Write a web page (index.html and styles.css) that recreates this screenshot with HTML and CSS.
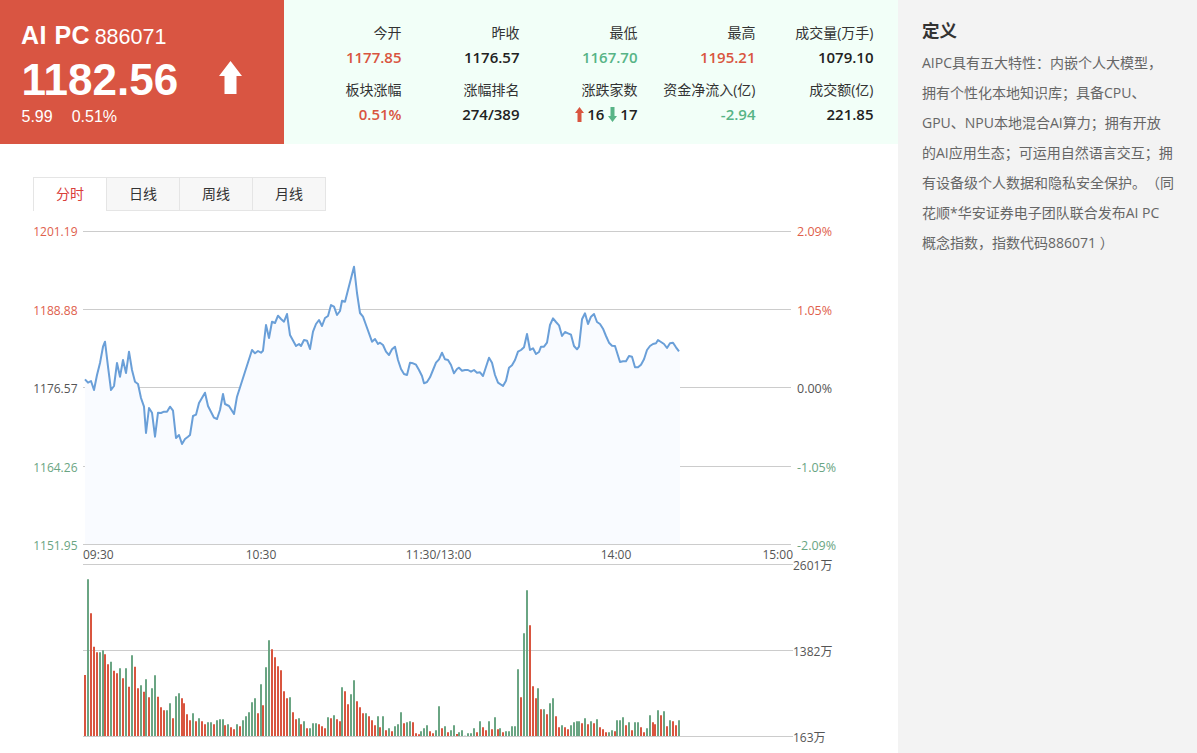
FILE: index.html
```html
<!DOCTYPE html>
<html lang="zh-CN">

<head>
    <meta charset="UTF-8">
    <meta name="viewport" content="width=device-width, initial-scale=1.0">
    <title>AI PC 886071</title>
    <link rel="stylesheet" href="styles.css">
</head>

<body>
    <main class="main">
        <header class="board">
            <div class="quote">
                <h1 class="quote-name">AI PC <span class="quote-code">886071</span></h1>
                <div class="quote-price">
                    <span>1182.56</span>
                    <svg class="quote-arrow" width="23" height="33" viewBox="0 0 23 33">
                        <polygon points="11.5,0 23,15 17.5,15 17.5,33 5.5,33 5.5,15 0,15" fill="#fff" />
                    </svg>
                </div>
                <div class="quote-change"><span>5.99</span><span>0.51%</span></div>
            </div>
            <dl class="stats">
                <div class="stat"><dt>今开</dt><dd class="up">1177.85</dd></div>
                <div class="stat"><dt>昨收</dt><dd>1176.57</dd></div>
                <div class="stat"><dt>最低</dt><dd class="down">1167.70</dd></div>
                <div class="stat"><dt>最高</dt><dd class="up">1195.21</dd></div>
                <div class="stat"><dt>成交量(万手)</dt><dd>1079.10</dd></div>
                <div class="stat"><dt>板块涨幅</dt><dd class="up">0.51%</dd></div>
                <div class="stat"><dt>涨幅排名</dt><dd>274/389</dd></div>
                <div class="stat">
                    <dt>涨跌家数</dt>
                    <dd class="updown">
                        <svg width="9" height="15" viewBox="0 0 9 15"><polygon points="4.5,0 9,6 6.5,6 6.5,15 2.5,15 2.5,6 0,6" fill="#d9553f" /></svg>
                        <span>16</span>
                        <svg width="9" height="15" viewBox="0 0 9 15"><polygon points="4.5,15 9,9 6.5,9 6.5,0 2.5,0 2.5,9 0,9" fill="#57b486" /></svg>
                        <span>17</span>
                    </dd>
                </div>
                <div class="stat"><dt>资金净流入(亿)</dt><dd class="down">-2.94</dd></div>
                <div class="stat"><dt>成交额(亿)</dt><dd>221.85</dd></div>
            </dl>
        </header>

        <div class="tabs">
            <a class="tab active">分时</a>
            <a class="tab">日线</a>
            <a class="tab">周线</a>
            <a class="tab">月线</a>
        </div>

        <svg class="chart" width="898" height="542" viewBox="0 211 898 542">
            <!-- price grid -->
            <path class="grid" d="M83 231.5H791M83 309.5H791M83 387.5H791M83 466.5H791M83 544.5H791" />
            <path id="priceArea" class="price-area" />
            <path id="priceLine" class="price-line" />

            <text class="axis up" x="77.5" y="236" text-anchor="end">1201.19</text>
            <text class="axis up" x="77.5" y="315" text-anchor="end">1188.88</text>
            <text class="axis" x="77.5" y="393" text-anchor="end">1176.57</text>
            <text class="axis fall" x="77.5" y="472" text-anchor="end">1164.26</text>
            <text class="axis fall" x="77.5" y="550" text-anchor="end">1151.95</text>

            <text class="axis pct up" x="797" y="236">2.09%</text>
            <text class="axis pct up" x="797" y="315">1.05%</text>
            <text class="axis pct" x="797" y="393">0.00%</text>
            <text class="axis pct fall" x="797" y="472">-1.05%</text>
            <text class="axis pct fall" x="797" y="550">-2.09%</text>

            <text class="axis" x="83" y="559">09:30</text>
            <text class="axis" x="261" y="559" text-anchor="middle">10:30</text>
            <text class="axis" x="438.5" y="559" text-anchor="middle">11:30/13:00</text>
            <text class="axis" x="616" y="559" text-anchor="middle">14:00</text>
            <text class="axis" x="793" y="559" text-anchor="end">15:00</text>

            <!-- volume grid -->
            <path class="grid" d="M83 564.5H793M83 650.5H793M83 736.5H793" />
            <path id="barsUp" class="bars bars-up" />
            <path id="barsDown" class="bars bars-down" />

            <text class="axis" x="793" y="570">2601万</text>
            <text class="axis" x="793" y="656">1382万</text>
            <text class="axis" x="793" y="742">163万</text>
        </svg>
    </main>

    <aside class="side">
        <h2>定义</h2>
        <p>AIPC具有五大特性：内嵌个人大模型，<br>拥有个性化本地知识库；具备CPU、<br>GPU、NPU本地混合AI算力；拥有开放<br>的AI应用生态；可运用自然语言交互；拥<br>有设备级个人数据和隐私安全保护。（同<br>花顺*华安证券电子团队联合发布AI PC<br>概念指数，指数代码886071 ）</p>
    </aside>

    <script src="script.js"></script>
</body>

</html>
```

FILE: styles.css
```css
* {
    box-sizing: border-box;
}

body {
    font-family: "Open Sans", "Noto Sans CJK SC", sans-serif;
    margin: 0;
    height: 753px;
    display: flex;
    overflow: hidden;
    background-color: #fff;
    color: #333;
}

.main {
    width: 898px;
    flex-shrink: 0;
}

.board {
    display: flex;
    height: 144px;
    background-color: #f2fff8;
}

.quote {
    width: 284px;
    padding: 20px 0 0 21px;
    background-color: #d95542;
    color: #fff;
    font-family: "Liberation Sans", Arial, sans-serif;
}

.quote-name {
    margin: 0;
    font-size: 25px;
    line-height: 30px;
    letter-spacing: 0.5px;
    font-weight: bold;
}

.quote-code {
    font-size: 21.5px;
    font-weight: normal;
    letter-spacing: 0;
    margin-left: -3px;
}

.quote-price {
    display: flex;
    align-items: center;
    height: 52px;
    margin-top: 2px;
    padding-left: 0.5px;
    font-size: 44px;
    font-weight: bold;
}

.quote-arrow {
    margin: -6px 0 0 41px;
}

.quote-change {
    display: flex;
    gap: 19px;
    font-size: 16px;
    line-height: 22px;
    padding-left: 0.5px;
}

.stats {
    display: grid;
    grid-template-columns: repeat(5, 118px);
    grid-auto-rows: 57px;
    margin: 0 0 0 -0.5px;
    padding-top: 22px;
    text-align: right;
}

.stat dt {
    font-size: 14px;
    line-height: 22px;
}

.stat dd {
    margin: 2px 0 0;
    font-size: 15px;
    line-height: 22px;
    font-weight: 600;
    color: #222;
}

.stat dd.up {
    color: #d9553f;
}

.stat dd.down {
    color: #57b486;
}

.updown {
    display: flex;
    justify-content: flex-end;
    align-items: center;
    gap: 3.5px;
}

.tabs {
    display: flex;
    margin: 33px 0 0 33px;
}

.tab {
    width: 74px;
    height: 34px;
    margin-right: -1px;
    border: 1px solid #e5e5e5;
    background-color: #f7f7f7;
    font-size: 14px;
    line-height: 32px;
    text-align: center;
}

.tab.active {
    background-color: #fff;
    border-bottom: none;
    color: #d9403a;
}

.chart {
    display: block;
}

.grid {
    fill: none;
    stroke: #ccc;
    stroke-width: 1;
}

.price-area {
    fill: #f9fbff;
}

.price-line {
    fill: none;
    stroke: #6a9fd8;
    stroke-width: 2;
    stroke-linejoin: round;
}

.bars {
    fill: none;
    stroke-width: 2;
}

.bars-up {
    stroke: #d9553f;
}

.bars-down {
    stroke: #6aa583;
}

.axis {
    font-size: 12px;
    fill: #555;
}

.axis.pct {
    font-size: 12.5px;
}

.axis.up {
    fill: #e0604c;
}

.axis.fall {
    fill: #6aa583;
}

.side {
    flex: 1;
    padding: 17px 0 0 24px;
    background-color: #f3f3f3;
    text-spacing-trim: space-all;
}

.side h2 {
    margin: 0;
    font-size: 17.5px;
    line-height: 26px;
    font-weight: bold;
}

.side p {
    margin: 5px 0 0;
    font-size: 14px;
    line-height: 30px;
    white-space: nowrap;
    color: #666;
}
```

FILE: script.js
```js
// price line, [x, y] in page px
const price = [
    [85, 379.3], [88, 382.7], [91, 381], [94, 390], [97, 375], [100, 363], [103, 346.7], [105, 341.7],
    [108, 366.7], [111, 390], [114, 386], [117, 363], [120, 376.7], [123, 360], [126, 373], [129, 351.7],
    [132, 370], [135, 381.7], [138, 384], [141, 398], [144, 406.7], [146, 433], [149, 408], [152, 412.7],
    [155, 436.7], [158, 412.7], [161, 413], [164, 411.7], [167, 411.7], [170, 406.7], [173, 410.7], [176, 438],
    [179, 435], [182, 444], [185, 439], [188, 436.7], [190, 435], [193, 416], [196, 414.7], [199, 403],
    [205, 392.7], [208, 406], [214, 417.7], [217, 419], [220, 410], [223, 394], [225, 404], [229, 406],
    [234, 414], [237, 396.7], [252, 350], [255, 353.3], [258, 351], [261, 352.7], [263, 350.7], [266, 325],
    [269, 338], [272, 321.7], [275, 323], [278, 315.7], [281, 319], [284, 321.7], [287, 314], [290, 335],
    [296, 346], [299, 344], [301, 346], [304, 340], [307, 340.7], [310, 349], [313, 331.7], [316, 324],
    [319, 320], [322, 326], [325, 318], [328, 316], [331, 305], [334, 306.7], [337, 315], [340, 311],
    [342, 300.7], [345, 301.7], [348, 290], [354, 266.7], [357, 293], [360, 313], [363, 316.7], [366, 325],
    [372, 341.7], [375, 339], [378, 344], [380, 342.7], [383, 345], [386, 351.7], [389, 355], [392, 349.3],
    [395, 346.7], [398, 360], [401, 369], [404, 374], [407, 375], [410, 362.7], [413, 363.3], [416, 364.7],
    [419, 370], [422, 376], [424, 383.3], [427, 382], [430, 377.3], [433, 370], [436, 362.7], [439, 359.3],
    [442, 352.7], [445, 359.3], [448, 360], [451, 365], [454, 373.3], [457, 369], [459, 367.7], [462, 370.7],
    [465, 370], [468, 370], [471, 371.7], [474, 370], [477, 372.7], [480, 372.3], [483, 376], [489, 357.7],
    [492, 362.7], [495, 375], [498, 382.7], [503, 386], [506, 380.7], [509, 367.7], [512, 365.3], [515, 360],
    [518, 351.7], [521, 350], [524, 347.3], [527, 334], [530, 350], [533, 348.3], [536, 354], [539, 352],
    [541, 346.7], [544, 346.7], [547, 342.7], [550, 325], [553, 318.3], [556, 322], [559, 325.3], [562, 336],
    [565, 332], [568, 333.3], [571, 334.7], [574, 346], [577, 349.3], [579, 346.7], [582, 319.3], [585, 313.3],
    [588, 324], [591, 316.7], [594, 314], [597, 322], [600, 324], [603, 328.7], [606, 336], [609, 342.7],
    [612, 345.7], [615, 346], [620, 362], [623, 361.3], [626, 361.3], [629, 356], [632, 356.7], [635, 367.3],
    [638, 367.3], [641, 364.7], [644, 359.3], [647, 350], [650, 346], [653, 344], [656, 343.3], [658, 340],
    [661, 342], [664, 344], [667, 348], [670, 343.3], [673, 342.7], [676, 347.3], [679, 351.3]
];

// volume bars: x*3 offset, top*3 offset, r = up / g = down
const barsLeft = `45r315 54g28 63r130 72r230 81r247 90g247 99g241 105r253 114r283 123g275 132r302 141r310
150g295 159r325 168g295 177r350 186g256 195r290 204r355 213g346 222r365 228g328 237r382 246g355 255g316
264r380 273r412 282r421 291g421 300g400 309r445 318g379 327g370 336r385 342r400 351r433 360r451 369g430
378r454 387g445 396r454 405r463 414g457 423g457 432r463 441g451 450g448 459g448 465r466 474g463 483r472
492r478 501g463 510r469 519g451 528g439 537g427 546g397 555g385 564r430 573g343 579r406 588g292 597g211
606r238 615r262 624r289 633r301 642r364 651r385 660g382 669r427 678r448 687g445 693r463 702g454 711r475
720g475 729g460 738g460 747r463 756r469 765r475 774g442 783r445 792g436 801r448 810r454 816g352 825r364
834r403 843g373 852g331 861r394 870r412 879r430 888g430 897r439 906r451 915r466 924g439`;

const barsRight = `0r472 9g439 18r481 27g475 36r484 45g469 54g463 63g427 72r460 81g457 90g454 99r457 108r490
117r493 123g484 132g475 141g466 150r484 159r490 168g481 177g409 186r475 195g469 204r487 213g481 222g466
231r492 237g487 246g481 255g497 264g490 273g490 282g475 291r487 300g454 309r472 318r481 327g454 336r478
345g442 354r478 360g475 369r487 378g484 387g484 396g469 405g469 414g298 423r382 432g190 441g61 450r166
459r349 468r385 474g355 483r418 492g418 501r433 510g400 519g385 528r439 537r472 546g466 555r472 564r478
573g466 582g457 591g454 597g454 606r460 615g445 624r463 633g454 642r460 651g448 660r472 669r478 678r487
687g487 696g481 705r484 711g451 720g451 729g442 738r466 747g457 756r481 765g457 774g457 783r472 792r487
801g475 810g436 819r457 825r463 834g421 843r436 852g424 861r469 870g451 879r454 888r466 897g451`;

const baseline = 736;
const linePath = price.map(p => p[0] + ' ' + p[1]).join('L');

document.getElementById('priceLine').setAttribute('d', 'M' + linePath);
document.getElementById('priceArea').setAttribute('d', 'M' + linePath + 'L680 351.3L680 544L85 544Z');

let upPath = '';
let downPath = '';

function addBars(text, originX) {
    text.trim().split(/\s+/).forEach(item => {
        const match = item.match(/(\d+)([rg])(\d+)/);
        const x = originX + match[1] / 3;
        const top = 570 + match[3] / 3;
        const seg = 'M' + x + ' ' + top.toFixed(1) + 'V' + baseline;
        if (match[2] === 'r') {
            upPath += seg;
        } else {
            downPath += seg;
        }
    });
}

addBars(barsLeft, 70);
addBars(barsRight, 380);

document.getElementById('barsUp').setAttribute('d', upPath);
document.getElementById('barsDown').setAttribute('d', downPath);
```
